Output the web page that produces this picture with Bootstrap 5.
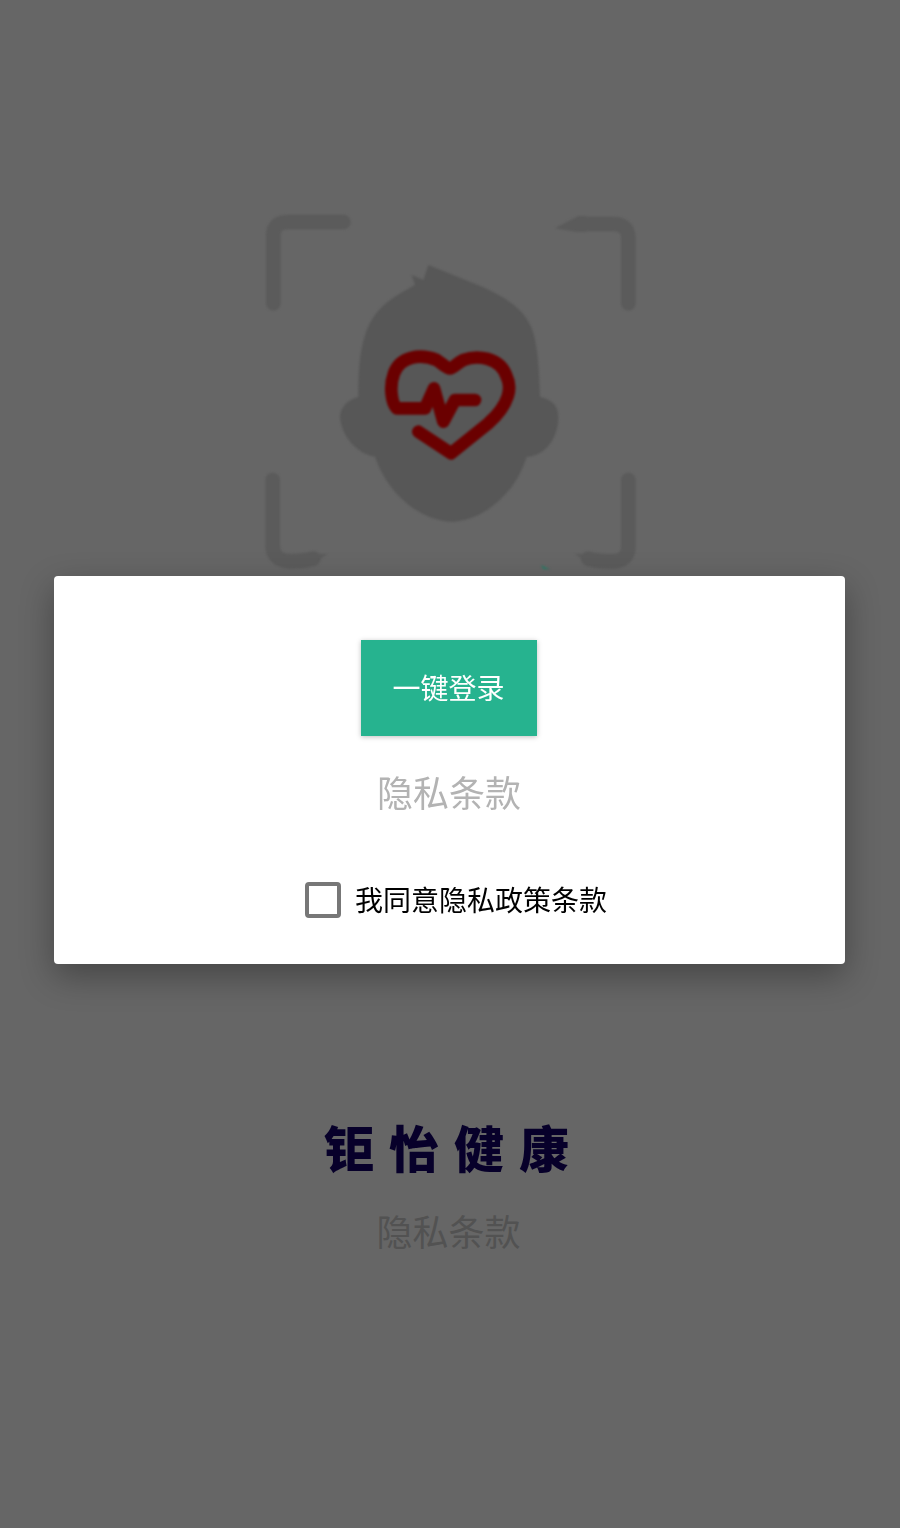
<!DOCTYPE html>
<html lang="zh">
<head>
<meta charset="utf-8">
<title>钜怡健康</title>
<link href="https://cdn.jsdelivr.net/npm/bootstrap@5.3.0/dist/css/bootstrap.min.css" rel="stylesheet">
<style>
html,body{margin:0;height:100%;background:#666;overflow:hidden}
body{font-family:"Noto Sans CJK SC","Liberation Sans",sans-serif}
.page-shell{height:1528px;padding-top:200px}
.logo-art{display:block;width:400px;height:380px;margin-left:250px;filter:blur(.8px)}
.brand-name{margin:536px 0 0;font-size:50px;line-height:60px;font-weight:900;letter-spacing:15px;color:#07002a;text-align:center;padding-left:8px}
.terms-dim{margin:32px 0 0;font-size:36px;line-height:44px;color:#525252;text-align:center;padding-right:3px}
.consent-dialog{position:fixed;left:54px;top:576px;width:791px;height:388px;border:0;border-radius:4px;box-shadow:0 12px 34px rgba(0,0,0,.32)}
.login-btn{width:176px;height:96px;margin-top:64px;margin-right:2px;padding:0 0 2px;border:0;border-radius:0;background:#26b38f;color:#fff;font-size:28px;line-height:94px;box-shadow:0 1px 5px rgba(0,0,0,.25)}
.login-btn:hover,.login-btn:active{background:#26b38f!important;color:#fff!important}
.terms-link{margin:32px 0 0;font-size:36px;line-height:46px;color:#b3b3b3;text-align:center;padding-right:1px}
.consent-row{margin-top:67px;margin-left:13px;gap:14px;height:36px}
.consent-check{appearance:none;width:36px;height:36px;margin:2px 0 0;border:4px solid #777;border-radius:4px;background:#fff}
.consent-label{font-size:28px;line-height:36px;color:#000}
</style>
</head>
<body>
<main class="page-shell">
  <svg class="logo-art" viewBox="0 0 1200 1140" fill="none" stroke-linecap="round" stroke-linejoin="round" aria-hidden="true">
    <g stroke="#5b5b5b" stroke-width="44">
      <path d="M70 310V105Q70 68 112 66H280"/>
      <path d="M1000 72H1090Q1135 72 1135 115V310"/>
      <path d="M68 840V1040Q70 1082 122 1084Q160 1084 190 1076"/>
      <path d="M1135 840V1040Q1135 1084 1085 1084Q1040 1084 1015 1076"/>
    </g>
    <path d="M915 85 985 48H1010V96H980Z" fill="#5b5b5b"/>
    <path d="M232 1062 170 1104H140V1062Z" fill="#5b5b5b"/>
    <path d="M975 1062 1040 1104H1060V1062Z" fill="#5b5b5b"/>
    <path d="M535 195 700 262C770 295 830 330 850 400C865 450 868 530 870 590C910 600 925 620 925 650C925 720 880 770 830 770C790 900 680 965 605 965C530 965 420 900 375 770C320 760 275 710 270 650C275 610 300 600 325 590C325 480 335 400 375 345C400 310 440 285 495 255L485 225 520 240Z" fill="#575757"/>
    <path d="M505 695 603 760 715 670C782 610 785 560 770 530C750 470 680 465 640 480C620 490 610 505 600 505C590 505 575 490 560 480C510 460 450 470 432 520C417 560 425 610 440 625H525L552 565 580 665 615 600H675" stroke="#6a0000" stroke-width="38"/>
    <path d="M872 1095 900 1108 880 1108Z" fill="#2f7a66"/>
  </svg>
  <h1 class="brand-name">钜怡健康</h1>
  <p class="terms-dim">隐私条款</p>
</main>
<section class="card consent-dialog">
  <div class="card-body p-0 d-flex flex-column align-items-center">
    <button type="button" class="btn login-btn">一键登录</button>
    <p class="terms-link">隐私条款</p>
    <label class="d-flex align-items-center consent-row">
      <input type="checkbox" class="consent-check">
      <span class="consent-label">我同意隐私政策条款</span>
    </label>
  </div>
</section>
<script src="https://cdn.jsdelivr.net/npm/bootstrap@5.3.0/dist/js/bootstrap.bundle.min.js"></script>
</body>
</html>
